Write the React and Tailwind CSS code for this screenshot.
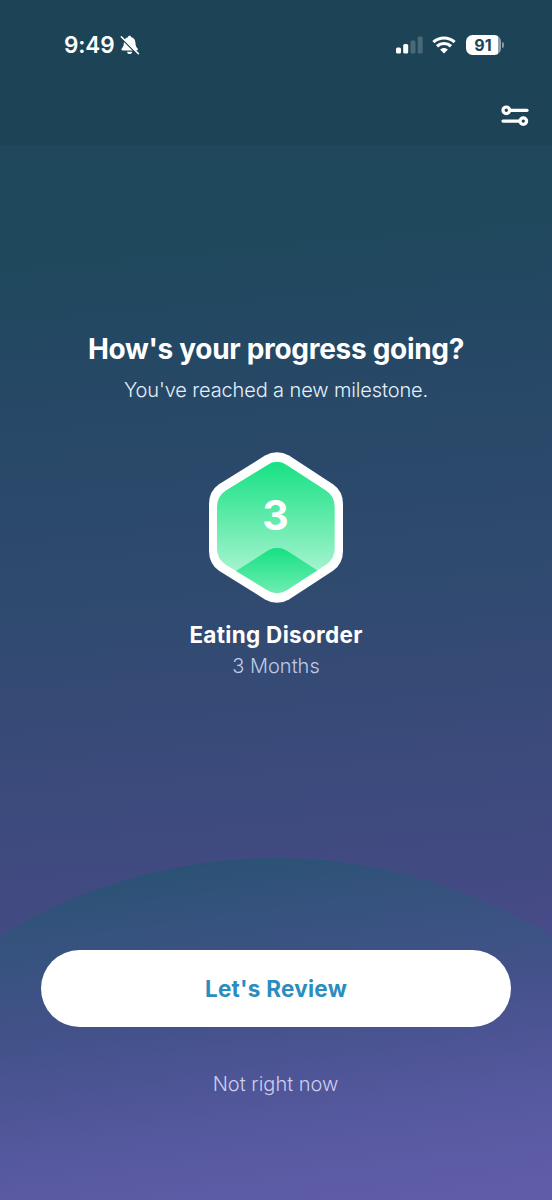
const StatusBar = () => (
  <div className="flex h-[88px] items-start justify-between pl-[64px] pr-12 pt-[30px]">
    <div className="flex h-[30px] items-center gap-1">
      <span className="w-[51px] whitespace-nowrap text-[22.5px] font-semibold leading-[30px] tracking-[-0.1px]">9:49</span>
      <BellOffIcon />
    </div>
    <div className="flex h-[30px] items-center">
      <SignalIcon />
      <WifiIcon />
      <Battery level={91} />
    </div>
  </div>
);

const BellOffIcon = () => (
  <svg width="20" height="20" viewBox="0 0 20 20" className="ml-[1px]">
    <path
      d="M9.6 0.7c-1 0-1.6.7-1.8 1.5C5.2 3 4 5 3.9 7.5c-.1 3-.7 4.3-2 5.7-.9 1-.4 2.2.8 2.2h13.900c1.200 0 1.700-1.200.8-2.200-1.300-1.400-1.900-2.700-2-5.700-.1-2.500-1.300-4.500-4-5.300C11.200 1.400 10.600.7 9.600.7ZM7 16.700c.2 1.400 1.300 2.300 2.600 2.300s2.400-.9 2.600-2.300Z"
      fill="white"
    />
    <path d="M0.900 2.900 17.300 19.300" stroke="#1c4456" strokeWidth="1.500" />
    <path d="M1.300 1.700 18.400 18.600" stroke="white" strokeWidth="1.500" strokeLinecap="round" />
  </svg>
);

const SignalIcon = () => (
  <svg width="28" height="18" viewBox="0 0 28 18" fill="white">
    <rect x="0" y="11.5" width="5" height="6" rx="1.5" />
    <rect x="7.2" y="8" width="5" height="9.5" rx="1.5" />
    <rect x="14.5" y="4.5" width="5" height="13" rx="1.5" opacity="0.2" />
    <rect x="21.7" y="0.5" width="5" height="17" rx="1.5" opacity="0.2" />
  </svg>
);

const WifiIcon = () => (
  <svg width="24" height="18" viewBox="0 0 24 18" className="ml-[8px]" fill="none" stroke="white" strokeWidth="3.2">
    <path d="M1.4 6.2C7.4.6 16.6.6 22.6 6.2" />
    <path d="M5 10.2C9 6.6 15 6.6 19 10.2" />
    <path d="M12 17.5 8.1 13.6C10.4 11.5 13.6 11.5 15.9 13.6Z" fill="white" stroke="none" />
  </svg>
);

const Battery = ({ level }) => (
  <div className="ml-[10px] flex items-center">
    <div className="flex h-[20px] w-[35px] items-center justify-center rounded-[6.5px] bg-[linear-gradient(to_right,#fff_91%,#8ea2ac_91%)] pr-[1px] text-[16px] font-bold leading-[20px] text-[#1c4456]">
      {level}
    </div>
    <div className="ml-[1px] h-[6px] w-[2px] rounded-r-full bg-white/45" />
  </div>
);

const FilterIcon = () => (
  <svg width="28" height="22" viewBox="0 0 28 22" fill="none" stroke="white" strokeWidth="3.2" strokeLinecap="round">
    <circle cx="5.3" cy="5.3" r="3.3" />
    <path d="M9.5 5.3H26" />
    <circle cx="22.3" cy="16.1" r="3.3" />
    <path d="M2 16.1H18" />
  </svg>
);

const MilestoneBadge = ({ value }) => (
  <div className="relative h-[151px] w-[135px]">
    <svg width="135" height="151" viewBox="0 0 135 151">
      <defs>
        <linearGradient id="badge" x1="0" y1="9" x2="0" y2="142" gradientUnits="userSpaceOnUse">
          <stop offset="0" stopColor="#16e183" />
          <stop offset="0.85" stopColor="#a8f4d0" />
          <stop offset="1" stopColor="#b8f6d8" />
        </linearGradient>
        <linearGradient id="peak" x1="0" y1="96" x2="0" y2="142" gradientUnits="userSpaceOnUse">
          <stop offset="0" stopColor="#16e183" />
          <stop offset="1" stopColor="#70edb2" />
        </linearGradient>
        <clipPath id="inner">
          <path d="M58 13.2Q68 6.5 78 13.2L117 38.5Q125.7 44.5 125.7 55V96.5Q125.7 107 117 112.8L78 138Q68 144.5 58 138L16.8 112.8Q8 107 8 96.5V55Q8 44.5 16.8 38.5Z" />
        </clipPath>
      </defs>
      <path
        d="M56 3.6Q68-3.3 80 3.6L124 32.2Q134 39 134 52V99Q134 112 124 118.8L80 147.4Q68 154.3 56 147.4L10 118.8Q0 112 0 99V52Q0 39 10 32.2Z"
        fill="white"
      />
      <g clipPath="url(#inner)">
        <rect width="135" height="151" fill="url(#badge)" />
        <path d="M16 126 58.5 98.8Q68 92.8 78 98.8L120 126V151H16Z" fill="url(#peak)" />
      </g>
    </svg>
    <span className="absolute inset-x-0 top-[38px] pr-[1px] text-center text-[41px] font-bold leading-[50px]">{value}</span>
  </div>
);

const App = () => {
  return (
    <div className="relative flex h-[1200px] w-full flex-col overflow-hidden bg-[linear-gradient(175deg,#1f485c_0%,#1f485c_20%,#254865_30%,#304a70_50%,#3b4a7b_63%,#434a83_74%,#4b4c8e_82%,#575a9f_93%,#605ca8_100%)] font-['Inter','Liberation_Sans',sans-serif] text-white">
      {/* hill behind the actions */}
      <div className="absolute left-[-251px] top-[858px] h-[1054px] w-[1054px] rounded-full bg-[linear-gradient(172deg,#2b5275_0px,#2b5275_70px,#36527e_125px,#44528b_230px,#4e5596_290px,#5759a0_350px,#605ca8_430px)]" />

      <header className="relative h-[145px] shrink-0 bg-[#1c4456]">
        <StatusBar />
        <div className="flex justify-end pr-[23px] pt-[17px]">
          <button aria-label="Filters">
            <FilterIcon />
          </button>
        </div>
      </header>

      <main className="relative flex flex-1 flex-col items-center pt-[184px]">
        <h1 className="whitespace-nowrap text-[28px] font-bold leading-[40px] tracking-[-0.3px]">How's your progress going?</h1>
        <p className="mt-[2px] whitespace-nowrap text-[20px] font-light leading-[38px] tracking-[-0.12px] text-[#e3f0fa]">You've reached a new milestone.</p>

        <div className="mt-[43px]">
          <MilestoneBadge value={3} />
        </div>
        <h2 className="mt-[17px] text-[22.5px] font-[650] leading-[30px] tracking-[0.3px]">Eating Disorder</h2>
        <p className="mt-[1px] text-[20px] font-[350] leading-[30px] text-[#bfcae8]">3 Months</p>
      </main>

      <footer className="relative flex flex-col items-center px-[41px] pb-[100px]">
        <button className="h-[77px] w-full rounded-full bg-white text-[22.5px] font-[650] tracking-[0.25px] text-[#2b8dbf]">Let's Review</button>
        <button className="mt-[42px] pr-[1px] text-[20px] font-light leading-[31px] text-[#cccef0]">Not right now</button>
      </footer>
    </div>
  );
};

export default App;
